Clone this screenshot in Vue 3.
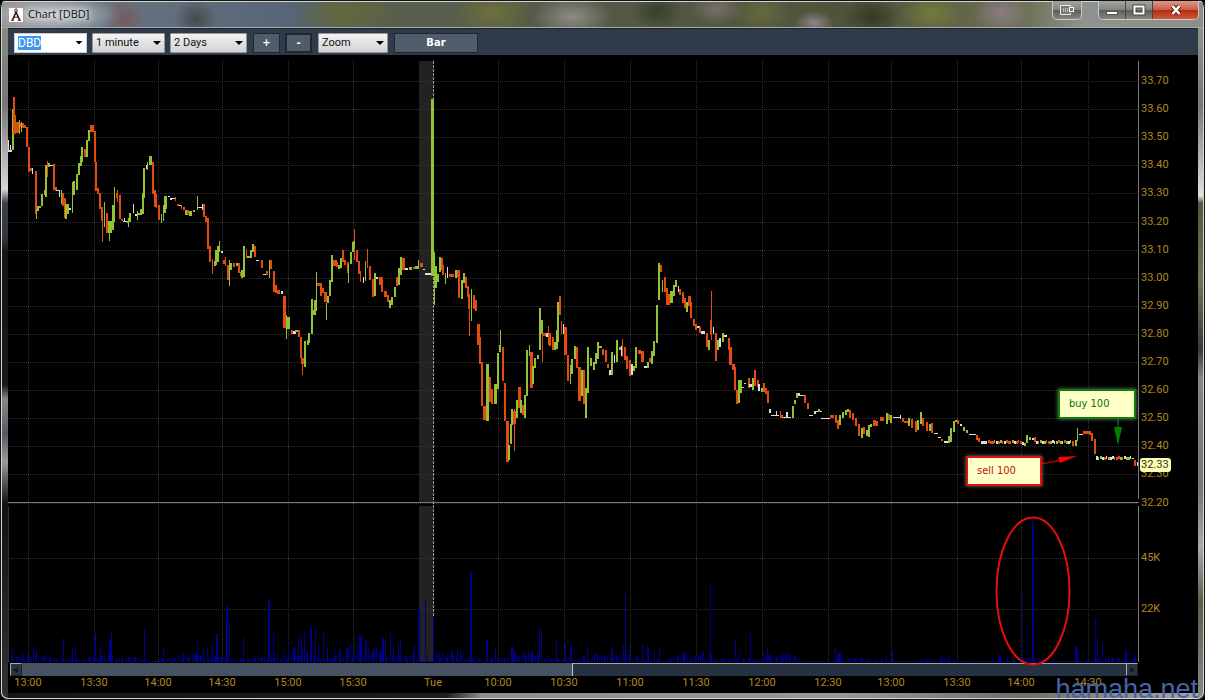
<template>
  <div class="window">
    <header class="titlebar">
      <svg class="logo" viewBox="0 0 16 16" aria-hidden="true">
        <rect x="0.5" y="0.5" width="15" height="15" fill="#fff" stroke="#d88a8a" />
        <path d="M8 5L4.6 13M8 5L11.6 13" fill="none" stroke="#222" stroke-width="1.6" />
        <path d="M5.6 10.2H10.4M3 13.2H6M9.6 13.2H13" stroke="#222" />
        <circle cx="8" cy="3.4" r="1.4" fill="none" stroke="#222" />
      </svg>
      <h1>Chart [DBD]</h1>
      <button type="button" class="caption-btn dock" aria-label="Dock">
        <svg viewBox="0 0 18 12">
          <path d="M12.5 2.5V1.5H2.5V10.5H12.5V9" fill="#777a76" stroke="#eee" />
          <path d="M5.5 4V8M7.5 4V8M9.5 4V8" stroke="#bbb" />
          <rect x="11.5" y="3.5" width="4" height="4" fill="#777" stroke="#fff" />
        </svg>
      </button>
      <div class="caption-group">
        <button type="button" class="caption-btn" aria-label="Minimize">
          <svg viewBox="0 0 14 12"><rect x="1.5" y="7.5" width="11" height="3" fill="#fff" stroke="#555" /></svg>
        </button>
        <button type="button" class="caption-btn" aria-label="Maximize">
          <svg viewBox="0 0 14 12">
            <rect x="2.5" y="2.5" width="9" height="7" fill="none" stroke="#444" stroke-width="4" />
            <rect x="2.5" y="2.5" width="9" height="7" fill="none" stroke="#fff" stroke-width="2" />
          </svg>
        </button>
        <button type="button" class="caption-btn close" aria-label="Close">
          <svg viewBox="0 0 14 12">
            <path d="M3.5 2L10.5 10M10.5 2L3.5 10" stroke="#5a2420" stroke-width="4.4" />
            <path d="M3.5 2L10.5 10M10.5 2L3.5 10" stroke="#fff" stroke-width="2.6" />
          </svg>
        </button>
      </div>
    </header>

    <form class="toolbar" @submit.prevent>
      <div class="combo">
        <input ref="symbolInput" v-model="symbol" type="text" aria-label="Symbol" />
        <button type="button" aria-label="Show symbols"></button>
      </div>
      <div class="drop interval">
        <select v-model="interval" aria-label="Interval">
          <option>1 minute</option>
          <option>5 minutes</option>
        </select>
      </div>
      <div class="drop range">
        <select v-model="range" aria-label="Range">
          <option>1 Day</option>
          <option>2 Days</option>
        </select>
      </div>
      <button type="button" class="tool plus">+</button>
      <button type="button" class="tool minus">-</button>
      <div class="drop zoom">
        <select v-model="mode" aria-label="Mode">
          <option>Zoom</option>
          <option>Pan</option>
        </select>
      </div>
      <button type="button" class="tool style">Bar</button>
    </form>

    <main class="chart">
      <div class="plot">
        <svg class="canvas" viewBox="8 55 1131 607" preserveAspectRatio="none" role="img" aria-label="DBD price and volume">
          <rect x="419" y="61" width="14" height="441" fill="#222" />
          <rect x="419" y="506" width="14" height="156" fill="#222" />
          <g class="grid">
            <line v-for="p in priceLabels" :key="p.text" x1="8" x2="1138" :y1="p.y + 0.5" :y2="p.y + 0.5" />
            <line v-for="p in volumeLabels" :key="p.text" x1="8" x2="1138" :y1="p.y + 0.5" :y2="p.y + 0.5" />
            <template v-for="t in times" :key="t.x">
              <line v-if="t.text !== 'Tue'" :x1="t.x + 0.5" :x2="t.x + 0.5" y1="61" y2="662" />
            </template>
          </g>
          <path class="day" d="M433.5 61V616" />
          <g class="volume">
            <rect v-for="(v, i) in volumes" :key="i" :x="v.x" :y="662 - v.h" :width="v.w" :height="v.h" :opacity="v.o" />
          </g>
          <path class="frame" d="M8 502.5H1139M1138.5 61V499M1138.5 506V662" />
          <path class="frame side" d="M8.5 506V662" />
          <g class="bars">
            <rect v-for="(b, i) in bars" :key="i" :class="b.c" :x="b.x" :y="b.y" :width="b.w" :height="b.h" />
          </g>
          <ellipse class="mark" cx="1033" cy="591" rx="36.5" ry="73.5" />
          <path d="M1041 464L1062 460" stroke="#b00000" stroke-width="1.4" />
          <path d="M1058 457L1077 456L1060 463Z" fill="#f00" />
          <path d="M1118 417V429" stroke="#063" stroke-width="1.4" />
          <path d="M1114 427H1122L1118 445Z" fill="#008000" />
        </svg>
        <div class="note buy">buy 100</div>
        <div class="note sell">sell 100</div>
      </div>

      <div class="price-axis">
        <span v-for="p in priceLabels" :key="p.text" :style="{ top: percentY(p.y) }">{{ p.text }}</span>
        <span v-for="p in volumeLabels" :key="p.text" :style="{ top: percentY(p.y) }">{{ p.text }}</span>
        <strong :style="{ top: percentY(465) }">32.33</strong>
      </div>

      <div class="scrollbar">
        <button type="button" class="arrow left" aria-label="Scroll left">
          <svg viewBox="0 0 8 8"><path d="M6 1V7L1 4Z" /></svg>
        </button>
        <div class="track"></div>
        <div class="thumb"></div>
        <button type="button" class="arrow right" aria-label="Scroll right">
          <svg viewBox="0 0 8 8"><path d="M2 1V7L7 4Z" /></svg>
        </button>
      </div>

      <div class="time-axis">
        <span v-for="t in times" :key="t.x" :style="{ left: percentX(t.x) }">{{ t.text }}</span>
      </div>
    </main>
    <div class="watermark">hamaha.net</div>
  </div>
</template>

<script setup>
import { ref, onMounted } from "vue";

const symbol = ref("DBD");
const interval = ref("1 minute");
const range = ref("2 Days");
const mode = ref("Zoom");
const symbolInput = ref(null);

onMounted(() => {
  symbolInput.value.focus();
  symbolInput.value.select();
});

const percentX = (x) => ((x - 8) / 1131) * 100 + "%";
const percentY = (y) => ((y - 55) / 607) * 100 + "%";

const priceLabels = Array.from({ length: 16 }, (_, i) => ({
  text: (33.7 - i * 0.1).toFixed(2),
  y: Math.round(81 + i * 28.1),
}));

const volumeLabels = [
  { text: "45K", y: 558 },
  { text: "22K", y: 609 },
];

const times = [
  [28, "13:00"], [94, "13:30"], [158, "14:00"], [222, "14:30"], [288, "15:00"], [353, "15:30"],
  [433, "Tue"], [498, "10:00"], [564, "10:30"], [630, "11:00"], [696, "11:30"], [762, "12:00"],
  [828, "12:30"], [891, "13:00"], [957, "13:30"], [1021, "14:00"], [1088, "14:30"],
].map(([x, text]) => ({ x, text }));

// x, top, bottom, colour (g up, r down, w unchanged), optional width
const barData = `
8 140 152 w 1,9 150 152 w 3,10 145 150 w 1,12 109 150 g,13 97 134 r,15 115 134 r 1,15 122 133 r 4,19 120 134 g 1,20 123 127 r,21 122 132 g 1,
22 123 128 r,24 125 128 r,26 127 147 r,28 147 172 r,29 168 171 r 3,32 168 174 w 1,35 171 214 r,36 209 219 g 1,37 206 211 g,39 206 208 g,
41 194 206 g,44 190 195 g,45 165 197 g,47 161 177 r 1,48 163 167 g,50 165 166 w 3,53 164 190 r,55 187 191 r,56 190 191 w 4,59 190 197 w 1,
61 190 204 g 1,62 193 206 r,64 198 218 r,65 204 219 g,67 204 214 g,69 208 210 w 2,72 182 213 g 1,73 181 195 g,76 174 190 g,78 163 175 g,
80 156 166 g,81 147 162 g,84 149 157 r,86 140 157 g,88 130 141 g,90 125 132 r 4,94 131 162 r,95 162 191 r,97 188 194 r,99 193 209 r,
102 207 242 r 1,101 207 221 r,104 202 227 g 1,106 213 233 r,108 221 233 g 4,109 230 241 g 1,112 205 230 g,114 187 222 g 1,116 193 198 r,117 190 202 r 1,
119 195 219 r,121 219 221 r,123 221 222 w 4,124 218 222 w 1,127 221 223 g,128 218 227 g 1,129 213 222 g,133 204 213 w 1,135 214 216 w,137 211 220 g 1,
138 213 215 g,140 209 215 g,142 193 214 g,143 168 198 g,146 165 169 w 1,147 162 170 g 1,149 156 165 g 3,152 162 194 r,154 190 207 r,156 194 208 r 1,
158 205 220 r,161 214 223 g 1,163 205 221 g 1,164 196 213 g,166 196 209 g 1,168 196 197 w,170 198 200 w,172 198 199 w 3,175 197 201 r 1,177 204 206 r,
179 205 206 w,181 205 209 r 1,183 207 210 r,185 210 215 g,187 210 215 r,189 211 216 g 3,193 210 212 g,197 196 210 g 1,198 207 208 w 6,202 204 210 w 1,
203 204 217 r,205 216 222 r,207 218 249 r,209 246 262 r,212 259 274 r 1,214 261 266 g,215 250 265 g,217 246 262 g,219 241 252 g 1,221 251 253 w,
223 260 264 r 3,225 257 266 r 1,227 265 280 r,229 260 286 g 1,230 263 270 g,233 263 267 r,236 263 266 g,238 263 273 r,240 272 276 r,241 270 278 g,
243 246 277 g,246 249 258 r 1,247 256 258 g 3,250 250 258 g,252 244 252 g,254 246 257 r,256 260 261 w 3,261 260 268 r,263 274 275 w 3,266 271 275 r,
269 260 278 g 1,270 260 269 r,273 271 292 r,275 285 293 r,277 290 294 r 3,281 291 294 w,283 296 328 r 3,286 315 339 g 1,287 317 329 g 3,291 330 334 r,
293 331 334 w 3,295 330 332 g 3,298 330 337 r,300 337 358 r,302 358 375 r 1,301 358 364 r 3,304 341 367 g,307 340 345 g,308 333 343 g,311 299 334 g,
313 310 315 g 3,314 300 312 g,316 272 311 g 1,317 283 286 r 3,320 283 296 r,322 288 293 r,324 292 302 r 3,326 303 320 g 1,327 296 303 g,329 280 296 g,
331 255 282 g,333 260 266 r 4,336 262 267 r,338 265 269 g,340 258 268 g,342 250 262 r,344 260 265 r,347 262 273 r,348 264 283 g 1,350 252 264 g,
352 242 252 g,354 229 260 r 1,353 241 248 g,356 250 262 r,358 261 274 r,360 271 282 r 1,363 277 283 w 1,365 261 281 g 1,367 249 268 r 1,369 266 280 r,
372 279 297 r,374 273 296 g,376 277 279 w,379 277 285 r,381 277 292 r,384 291 297 r 3,387 295 302 r,389 300 308 g,391 297 305 g,394 287 297 g,
396 277 286 r,398 268 285 g,400 257 275 g,402 258 270 r 3,405 268 270 w 3,409 267 270 g 3,413 267 269 r 2,415 266 269 g 4,418 260 269 g 1,420 263 267 r 3,
423 269 270 w,425 273 275 w 6,431 99 276 g 3,434 252 305 g 1,435 266 288 g,437 274 282 g,439 257 272 g,441 258 270 r,442 265 275 r,445 273 284 g 1,
447 267 278 w 1,449 274 277 r 5,455 270 278 g,457 270 277 r,458 270 298 r,461 280 299 g,463 273 283 g,465 277 288 r,467 286 297 r,469 295 336 r 1,
468 294 309 r,471 289 321 g 1,473 295 309 r,475 300 311 r,477 324 345 r 3,479 337 364 r,481 362 406 r,483 406 420 r 3,486 364 421 g 3,489 377 402 r,
491 389 404 r,494 384 404 g 3,497 353 389 g,499 345 352 g,500 330 350 g 1,502 347 381 r,504 383 421 r,506 421 462 r 3,508 445 460 g,510 424 444 g,
511 409 425 g,514 409 451 r 1,513 411 424 r 3,516 400 418 g,518 387 408 r 3,520 400 413 g,522 405 415 r,524 395 418 g,526 350 396 g,529 345 356 g 1,
530 352 388 r 3,532 366 384 g,534 358 368 g,537 355 359 g,539 308 350 g 2,541 320 334 g,542 333 362 r 1,543 333 336 r 3,546 333 337 w,548 326 345 r 1,
549 333 346 r,552 337 350 r,554 342 350 g,556 330 349 g,557 302 342 g,559 296 315 r,561 321 334 r 1,563 324 334 w 1,564 327 355 r 3,567 355 381 r,
570 365 384 g 1,571 359 374 g,574 346 359 g,576 347 368 r,578 367 401 r 3,581 370 396 g,583 370 404 r,585 388 418 g,587 347 393 g,590 358 366 g,
593 362 370 g,595 353 364 g,597 342 359 g,598 346 348 g 4,602 349 355 r,605 350 362 r,607 364 368 r,609 370 375 w,611 352 375 g,614 355 363 w 1,
616 340 362 g,619 347 350 g,621 346 356 w,622 339 357 r 1,624 347 360 r,626 356 369 r,629 360 376 r,631 364 375 w,633 366 371 g,635 347 368 g,
638 350 354 r 3,641 351 362 r 3,644 366 368 w 3,647 362 368 g,649 358 362 r,651 351 364 g,653 341 356 g,656 305 343 g,658 263 300 g,660 265 272 r,
662 280 292 g 1,664 277 292 r,666 288 305 r,668 294 305 r,670 291 303 g 3,673 285 296 g,675 280 287 g,678 286 292 w 1,679 289 295 r,682 292 303 r,
684 298 308 r,686 302 312 g,688 296 306 r 3,690 302 318 r,693 319 326 r,695 324 330 r,697 326 328 w 3,699 327 333 r,701 331 334 w 4,706 333 347 r,
708 340 350 g,711 291 340 r 1,710 320 334 r,713 327 334 w 1,715 333 361 r,717 340 350 g,719 338 347 w,722 333 342 g,724 335 337 w 3,728 338 350 r,
729 347 365 r 3,732 364 370 r 3,734 367 390 r,736 390 404 r,738 380 403 g,740 380 393 g,742 387 388 w,744 383 384 w,748 378 388 r,749 384 387 w 3,
752 378 390 g,754 370 386 r,757 380 387 r,758 384 391 w,761 388 392 g,763 383 392 r,765 388 394 r,767 391 403 r,769 409 413 w,771 415 416 w 8,
776 411 415 w 1,780 411 418 r 1,781 415 418 r,783 417 418 w 8,786 412 418 w,792 406 418 g,794 400 404 g,796 393 398 g,798 393 396 w,800 395 396 w 5,
804 395 403 r,807 403 409 r,809 415 416 w 4,814 411 414 w,816 411 412 w 6,818 409 412 g,821 418 419 w 9,830 415 418 r 4,835 415 423 r,837 420 429 r,
839 415 425 g,842 412 418 g,845 410 415 g,847 409 412 g,849 410 418 r,852 413 420 r,855 418 426 r,858 424 436 r,861 428 438 g,863 427 434 r,
866 430 436 g,868 425 437 g,870 424 427 g,873 420 426 r 3,876 421 426 r,880 417 421 r 4,886 413 424 g,888 414 420 r,890 415 423 g,893 417 418 w 7,
900 415 419 w 1,902 418 422 r,904 421 423 r 5,908 418 426 g,911 419 428 r,915 421 432 r,917 420 430 g,920 412 424 g,922 418 426 r,926 422 431 r,
929 424 431 g,931 423 433 r,934 433 434 w 4,938 437 438 w 3,941 439 441 r,944 441 443 w 4,948 436 443 g,950 428 442 g,953 421 432 g,955 420 422 g,
957 420 424 r,960 424 426 w,963 427 431 g,966 430 433 g,969 434 435 w 7,976 435 440 r,978 438 442 r,981 441 444 w 6,1022 442 445 w,1024 443 446 g,
1026 435 443 g,1029 437 440 g,1032 438 440 w,1034 437 442 r,1036 441 444 w 3,1072 441 446 r,1075 440 446 g,1077 428 441 g 1,1079 434 435 w 4,1083 431 434 r 6,
1089 431 435 r,1091 433 441 r,1094 439 454 r,1096 456 460 w,1132 458 459 w,1134 460 466 r,1137 462 466 w 1`;

const bars = barData
  .trim()
  .split(/,\s*/)
  .map((item) => {
    const [x, top, bottom, c, w] = item.split(" ");
    return { x: +x, y: +top, h: bottom - top, w: +(w || 2), c };
  });

// quiet stretches, where every minute closes on the same price
const addFlat = (from, to, y, pattern) => {
  for (let x = from, i = 0; x < to; x += 2, i++) {
    bars.push({ x, y: y + (i % 3 === 1 ? 0 : 1), w: i % 4 ? 2 : 1, h: 3, c: pattern[i % pattern.length] });
  }
};
addFlat(986, 1021, 440, "wrrrgwrgrwrrrg");
addFlat(1038, 1071, 440, "rgwgrrgwwgrgw");
addFlat(1098, 1132, 456, "ggwrwgwwrrrgrw");

const spikes = [
  [12, 14], [22, 9], [33, 16], [36, 12], [63, 24], [72, 14], [75, 12], [94, 19], [95, 29], [100, 15], [109, 22, 2], [111, 29],
  [144, 34], [163, 15], [183, 10], [197, 19], [203, 14], [207, 15], [212, 18], [216, 28, 2], [226, 56, 2], [229, 42], [243, 25],
  [268, 62, 2], [273, 29], [284, 12], [288, 18], [298, 25], [301, 25], [304, 29], [310, 35, 2], [315, 34], [318, 18], [323, 29],
  [327, 15], [334, 12], [348, 16], [353, 10], [359, 26, 2], [361, 28], [365, 20], [382, 24, 2], [385, 22], [390, 30], [393, 17],
  [398, 20], [400, 21], [414, 18], [418, 55, 2], [425, 62], [427, 8], [433, 45], [438, 11], [451, 13], [457, 15], [460, 12],
  [470, 90, 2], [486, 22, 2], [495, 13], [511, 16, 2], [514, 12], [532, 12], [539, 35], [541, 31], [556, 22], [565, 19],
  [570, 16, 2], [587, 16], [611, 13, 2], [623, 18], [625, 68], [629, 15], [642, 18], [647, 15, 2], [654, 11], [659, 15],
  [685, 10], [710, 78], [735, 23], [739, 12], [750, 30], [767, 14], [785, 8], [835, 14], [837, 9, 4], [886, 7], [892, 12], [940, 6],
  [949, 6], [998, 7, 3], [1007, 5], [1022, 68], [1027, 36], [1032, 141, 2], [1075, 16, 2], [1077, 12], [1095, 45], [1097, 25],
  [1102, 18], [1108, 8], [1112, 5], [1125, 12, 2], [1134, 7, 2],
].map(([x, h, w = 1]) => ({ x, h, w, o: x === 1022 || x === 1027 ? 0.5 : 1 }));

const level = (x) => {
  if (x < 290) return 10;
  if (x < 418) return 24;
  if (x < 434) return 2;
  if (x < 800) return 12;
  return 5;
};

// low volume under the spikes
const noise = [];
for (let i = 0; i < 514; i++) {
  const x = Math.round(9 + i * 2.2);
  const r = Math.abs(Math.sin(i * 12.9898) * 43758.5453) % 1;
  const swell = 0.65 + 0.35 * Math.sin(i / 6);
  noise.push({ x, h: Math.max(1, Math.round(level(x) * (0.2 + 0.8 * r) * swell)), w: i % 3 ? 1 : 2, o: 0.9 });
}
const volumes = [...noise, ...spikes];
</script>

<style>
body {
  margin: 0;
  background: #000;
}
</style>

<style scoped>
* {
  box-sizing: border-box;
}

.window {
  position: relative;
  display: flex;
  flex-direction: column;
  min-height: 100vh;
  padding: 0 7px 7px 8px;
  overflow: hidden;
  border-radius: 8px;
  font-family: "Roboto", sans-serif;
  font-size: 11px;
  background:
    linear-gradient(#8d9086, #777 15%, #d8d8d8 27%, #3a4048 29%, #32363c 34%, #151515 36%, #1a1818 55%, #888 57%, #555b63 62%, #999 66%, #111 72%, #333) left / 8px 100% no-repeat,
    linear-gradient(#99a090, #777 15%, #e0e0e0 28%, #4f5a3c 29%, #6d765a 40%, #393b36 50%, #8b8583 54%, #777 70%, #aaa 78%, #59604a 86%, #888) right / 7px 100% no-repeat,
    linear-gradient(90deg, #161616, #1c1c1a 37%, #8d8d8b 40%, #969696 70%, #6f6f68 85%, #a9aaa5) bottom / 100% 7px no-repeat,
    #777;
  box-shadow: inset 0 0 0 1px #111, inset 0 0 0 2px #d5d8d5;
}

.titlebar {
  display: flex;
  align-items: flex-start;
  height: 28px;
  margin: 0 -5px 0 -6px;
  padding-left: 6px;
  border-top: 1px solid #111;
  border-bottom: 1px solid #a9ada8;
  box-shadow: inset 0 1px 0 #d5d8d5;
  background:
    radial-gradient(ellipse 70px 20px at 50px 14px, #d5d9dccc, transparent),
    radial-gradient(ellipse 22px 20px at 122px 18px, #755a5c, transparent),
    radial-gradient(ellipse 22px 20px at 194px 18px, #474b4b, transparent),
    radial-gradient(ellipse 50px 22px at 345px 12px, #64693b, transparent),
    radial-gradient(ellipse 40px 24px at 490px 12px, #6d703c, transparent),
    radial-gradient(ellipse 40px 22px at 570px 16px, #8e8b86, transparent),
    radial-gradient(ellipse 26px 20px at 655px 10px, #35402b, transparent),
    radial-gradient(ellipse 28px 16px at 715px 8px, #77706a, transparent),
    radial-gradient(ellipse 30px 22px at 760px 12px, #666a3e, transparent),
    radial-gradient(ellipse 20px 12px at 812px 22px, #8d838a, transparent),
    radial-gradient(ellipse 30px 22px at 870px 16px, #343925, transparent),
    radial-gradient(ellipse 30px 20px at 930px 12px, #737b3b, transparent),
    radial-gradient(ellipse 30px 22px at 1000px 12px, #897c83, transparent),
    linear-gradient(90deg, #8b9095, #667280 10%, #566577 24%, #59614f 28%, #4f533c 70%, #6c6f51 85%, #8e9391 90%, #8b8f89);
}

.logo {
  width: 16px;
  height: 16px;
  margin-top: 6px;
}

h1 {
  flex: 1;
  margin: 5px 0 0 4px;
  color: #111;
  font: 11px/16px "Open Sans", sans-serif;
  text-shadow: 0 0 6px #fff, 0 0 8px #fff;
}

.caption-group {
  display: flex;
  margin: 0 4px 0 16px;
  overflow: hidden;
  border: 1px solid #c9cbc6;
  border-top: 0;
  border-radius: 0 0 5px 5px;
}

.caption-btn {
  display: flex;
  align-items: center;
  justify-content: center;
  width: 27px;
  height: 18px;
  padding: 0;
  border: 0;
  border-right: 1px solid #44463f;
  background: linear-gradient(#a3a5a0, #83857f 48%, #5d5f58 52%, #85877f);
}

.caption-btn svg {
  width: 14px;
  height: 12px;
}

.caption-btn.dock {
  width: 30px;
  height: 19px;
  border: 1px solid #c9cbc6;
  border-top: 0;
  border-radius: 0 0 5px 5px;
}

.dock svg {
  width: 18px;
}

.caption-btn.close {
  width: 45px;
  border-right: 0;
  background: linear-gradient(#dc9a8a, #cb5f48 48%, #b32d12 52%, #d2573a);
}

.toolbar {
  display: flex;
  align-items: center;
  gap: 5px;
  height: 27px;
  padding: 1px 6px 0;
  border-top: 1px solid #1c222b;
  background: #2f3b4b;
}

.combo {
  display: flex;
  align-items: center;
  width: 73px;
  height: 20px;
  padding: 0 3px;
  border: 1px solid #c5ccd4;
  background: #fff;
}

.combo input {
  flex: 1;
  min-width: 0;
  height: 14px;
  padding: 0;
  border: 0;
  outline: 0;
  color: #111;
  background: none;
  font: inherit;
  font-size: 12px;
  line-height: 14px;
}

.combo input::selection {
  color: #fff;
  background: #3c97f0;
}

.combo button {
  width: 8px;
  height: 4px;
  padding: 0;
  border: 0;
  background: #000;
  clip-path: polygon(0 0, 100% 0, 50% 100%);
}

.drop {
  position: relative;
  height: 20px;
}

.drop::after {
  content: "";
  position: absolute;
  top: 8px;
  right: 4px;
  border: 4px solid transparent;
  border-top: 4px solid #000;
  border-bottom: 0;
  pointer-events: none;
}

.drop select {
  width: 100%;
  height: 100%;
  padding: 0 3px;
  appearance: none;
  border: 1px solid #999;
  border-radius: 1px;
  color: #111;
  background: linear-gradient(#f4f4f4, #e2e2e2 50%, #d2d2d2);
  font: inherit;
}

.interval {
  width: 73px;
}

.range {
  width: 77px;
}

.zoom {
  width: 70px;
}

.tool {
  height: 20px;
  padding: 0;
  border: 1px solid #1f2730;
  color: #fff;
  background: #515c6b;
  font: bold 10px/16px "DejaVu Sans", sans-serif;
}

.plus,
.minus {
  width: 27px;
}

.plus {
  margin-left: 1px;
}

.minus {
  border-width: 2px;
}

.zoom,
.style {
  margin-left: 1px;
}

.style {
  width: 84px;
}

.chart {
  display: grid;
  flex: 1;
  grid-template-columns: 1fr 59px;
  grid-template-rows: minmax(300px, 1fr) 14px 17px;
  color: #b08820;
  background: #000;
}

.plot {
  position: relative;
  z-index: 1;
  min-width: 0;
}

.canvas {
  position: absolute;
  inset: 0;
  width: 100%;
  height: 100%;
  overflow: visible;
  pointer-events: none;
}

.grid line {
  stroke: #303030;
  stroke-dasharray: 1 1;
}

.day {
  stroke: #999;
  stroke-dasharray: 3 1;
}

.frame {
  fill: none;
  stroke: #777;
}

.side {
  stroke: #333;
}

.bars,
.volume {
  shape-rendering: crispEdges;
}

.volume {
  fill: #00008b;
}

.g {
  fill: #93c232;
}

.r {
  fill: #e44b10;
}

.w {
  fill: #ddd;
}

.mark {
  fill: none;
  stroke: #e60d0d;
  stroke-width: 2;
}

.note {
  position: absolute;
  padding: 4px 9px;
  border: 2px solid;
  background: #ffffc8;
  box-shadow: 0 0 4px #777;
  font: 11px/18px "DejaVu Sans Condensed", "DejaVu Sans", sans-serif;
}

.buy {
  top: 55%;
  right: 3px;
  width: 78px;
  border-color: #0a800a;
  color: #0a700a;
}

.sell {
  top: 66%;
  right: 97px;
  width: 76px;
  border-color: #e01010;
  color: #c01010;
}

.price-axis {
  position: relative;
  font-size: 11px;
  line-height: 14px;
}

.price-axis span,
.price-axis strong {
  position: absolute;
  left: 2px;
  transform: translateY(-50%);
}

.price-axis strong {
  left: 1px;
  padding: 0 2px 0 1px;
  border-radius: 3px;
  color: #333;
  background: #ffffb0;
  font-weight: normal;
}

.scrollbar {
  display: flex;
  grid-column: 1;
  align-items: stretch;
  padding: 1px 1px 0 2px;
}

.arrow {
  display: flex;
  align-items: center;
  justify-content: center;
  width: 12px;
  padding: 0;
  border: 1px solid #1b222c;
  border-top-color: #aab;
  border-left-color: #aab;
  background: #2b3542;
}

.arrow svg {
  width: 8px;
  height: 8px;
  fill: #101820;
}

.track {
  flex: 551;
  background: #465262;
}

.thumb {
  flex: 554;
  border-top: 1px solid #a0a5ac;
  border-left: 1px solid #c0c4ca;
  background: #263242;
}

.time-axis {
  position: relative;
  grid-column: 1;
  font-size: 11px;
  line-height: 14px;
}

.time-axis span {
  position: absolute;
  top: 0;
  transform: translateX(-50%);
}

.watermark {
  position: absolute;
  right: 7px;
  bottom: -4px;
  color: #4663a8;
  font: 27px/30px "Liberation Sans", sans-serif;
}
</style>
